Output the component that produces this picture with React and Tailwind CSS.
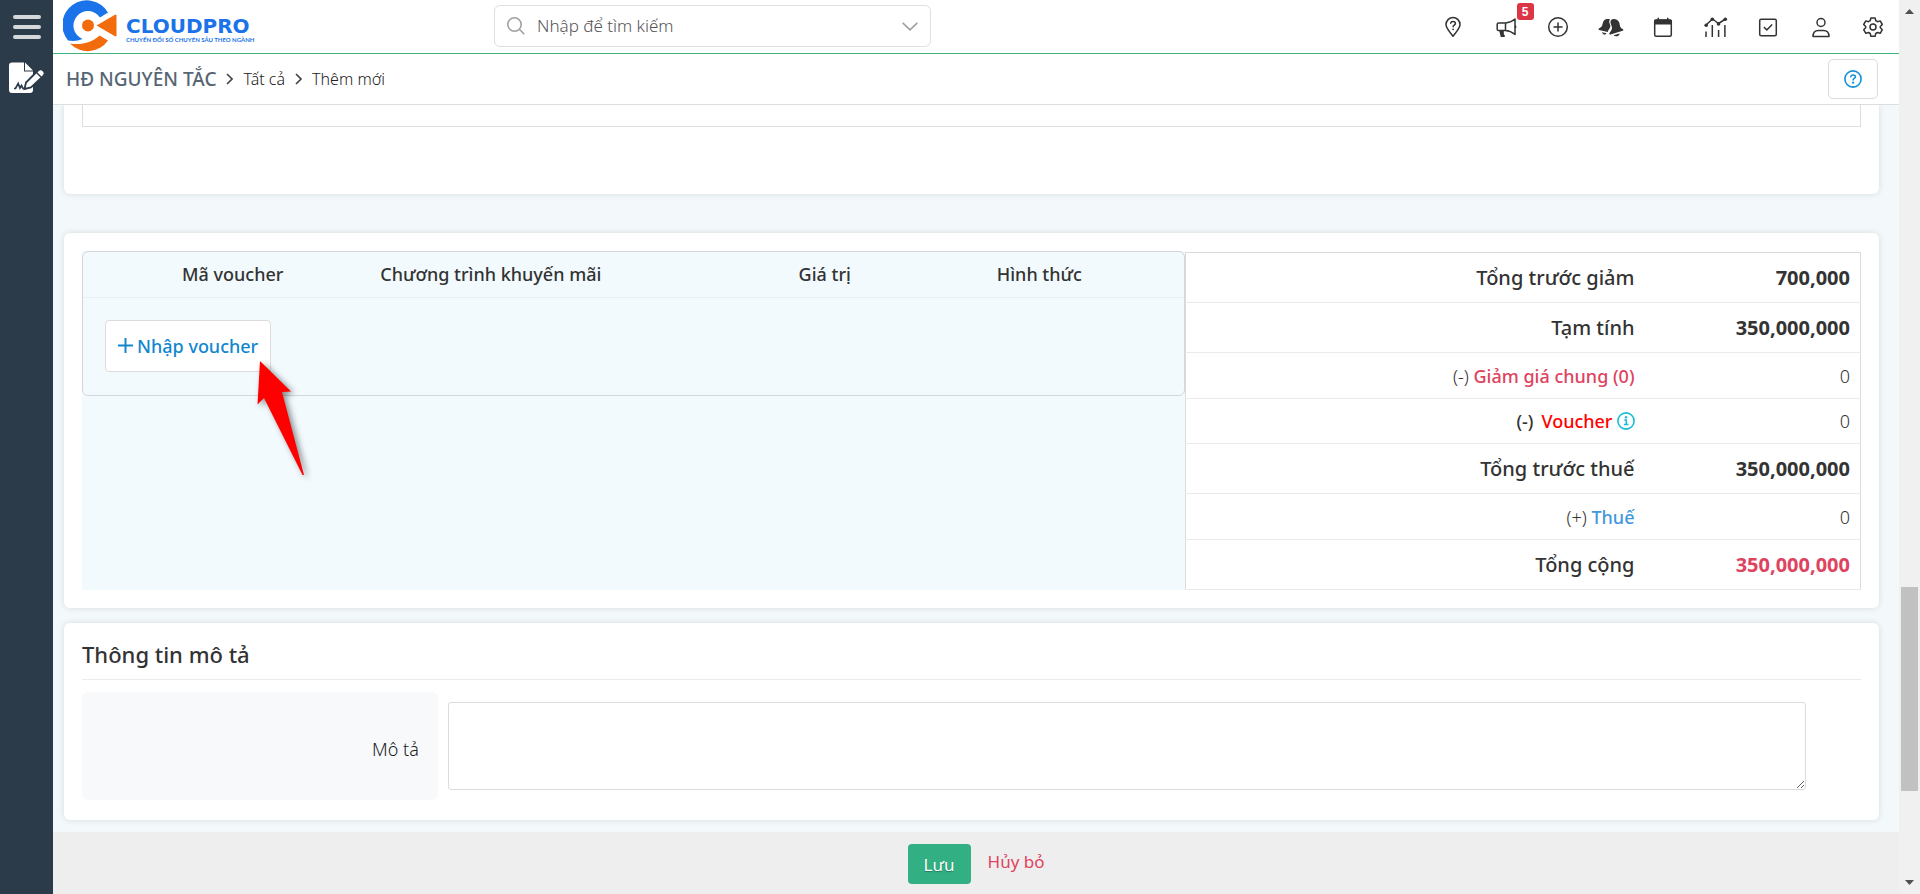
import { useState } from "react";

const headerIcons = [
  { id: "help", label: "Bản đồ", icon: <MapQuestionIcon /> },
  { id: "news", label: "Thông báo", icon: <MegaphoneIcon />, badge: 5 },
  { id: "add", label: "Thêm nhanh", icon: <PlusCircleIcon /> },
  { id: "bells", label: "Nhắc nhở", icon: <BellsIcon /> },
  { id: "calendar", label: "Lịch", icon: <CalendarIcon /> },
  { id: "report", label: "Báo cáo", icon: <ChartIcon /> },
  { id: "task", label: "Công việc", icon: <CheckSquareIcon /> },
  { id: "user", label: "Tài khoản", icon: <UserIcon /> },
  { id: "settings", label: "Cài đặt", icon: <GearIcon /> },
];

function Svg({ children, className = "size-6" }) {
  return (
    <svg
      viewBox="0 0 24 24"
      className={className}
      fill="none"
      stroke="currentColor"
      strokeWidth="1.5"
      strokeLinecap="round"
      strokeLinejoin="round"
      aria-hidden="true"
    >
      {children}
    </svg>
  );
}

function MapQuestionIcon() {
  return (
    <Svg>
      <path d="M12 21.3C10.5 19.1 5 13.600 5 9.600a7 7 0 0 1 14 0c0 4-5.500 9.500-7 11.700Z" />
      <path d="M9.700 8.200c.2-1.100 1.100-1.700 2.300-1.700 1.400 0 2.400.8 2.400 2 0 1.700-2.300 1.600-2.300 3.200" />
      <circle cx="12.100" cy="14.300" r=".9" fill="currentColor" stroke="none" />
    </Svg>
  );
}

function MegaphoneIcon() {
  return (
    <Svg>
      <path d="M11.500 8H4.500a1.300 1.300 0 0 0-1.300 1.300v4.900a1.300 1.300 0 0 0 1.300 1.300h7c3 .1 6.400 1.400 9.500 4V4c-3.100 2.600-6.500 3.900-9.500 4Zm0 0v7.500" />
      <path d="M5.200 15.800 6.800 22h4v-1.500l-1-1.200v-3.500Z" fill="currentColor" stroke="none" />
      <path d="M21 10v3.600c.9-.2 1.400-.9 1.400-1.800S21.900 10.200 21 10Z" fill="currentColor" stroke="none" />
    </Svg>
  );
}

function PlusCircleIcon() {
  return (
    <Svg>
      <circle cx="12" cy="12" r="9.300" />
      <path d="M12 8v8M8 12h8" />
    </Svg>
  );
}

function BellsIcon() {
  return (
    <svg viewBox="0 0 26 24" className="h-6 w-[26px] shrink-0" fill="currentColor" aria-hidden="true">
      <path d="M12 4.300C10.500 3.700 7.500 3.800 6 5.500 4.300 7.500 5 10.300 3.200 12L.9 13.400c-.6.500-.5 1.300.2 1.500l8.700 2.100c.1-2.200 2.500-3.300 2.600-5.700 0-2.300-2.300-4-.4-7Z" />
      <path d="M13.200 4.800C15.500 3.300 19.500 4 21 7c1 2.200.5 4.300 2 5.900l2 1.400c.6.500.4 1.200-.3 1.400L12.500 19.600c-.9.200-1.500-.7-1-1.500.9-1.500 2.400-2.600 2.500-5 .1-2.900-2.800-5.200-.8-8.300Z" />
      <path d="M4 17.200l4.500 1.100c-.9 2-3.700 1.400-4.500-1.100ZM15.500 20.200l6-1.800c.2 2.500-3.700 4-6 1.800Z" />
    </svg>
  );
}

function CalendarIcon() {
  return (
    <Svg>
      <rect x="3.700" y="5.200" width="16.600" height="16" rx="1.500" />
      <path d="M3 9.500V6.200C3 5 3.800 4.300 5 4.300h14c1.200 0 2 .7 2 1.900v3.300Z" fill="currentColor" stroke="none" />
      <path d="M7.200 3.200v2M16.800 3.200v2" />
    </Svg>
  );
}

function ChartIcon() {
  return (
    <Svg>
      <path d="m2 10 6.500-6 6 4.500L21.500 4" />
      <path d="M2 16.500V22M8.300 10v12M14.600 15v7M20.900 10v12" strokeLinecap="butt" />
      <g fill="currentColor" stroke="none">
        <circle cx="2.200" cy="10.200" r="1.800" />
        <circle cx="8.300" cy="4.200" r="1.800" />
        <circle cx="14.500" cy="8.900" r="1.800" />
        <circle cx="21.300" cy="4.300" r="1.800" />
      </g>
    </Svg>
  );
}

function CheckSquareIcon() {
  return (
    <Svg>
      <rect x="3.700" y="4.200" width="16.600" height="16.600" rx="1.500" />
      <path d="m8.300 12.500 2.500 2.400 4.900-5" />
    </Svg>
  );
}

function UserIcon() {
  return (
    <Svg>
      <circle cx="12" cy="7.500" r="4" />
      <path d="M4 21.500c0-3.700 2.200-6 5.500-6h5c3.300 0 5.500 2.300 5.500 6Z" />
    </Svg>
  );
}

function GearIcon() {
  return (
    <Svg>
      <path d="M9.900 3h4.200l.7 2.700 1.700 1 2.700-.8 2.100 3.600-2 2v1.200l2 2-2.100 3.600-2.700-.8-1.700 1-.7 2.700H9.900l-.7-2.700-1.700-1-2.700.8-2.100-3.600 2-2v-1.200l-2-2 2.100-3.600 2.700.8 1.700-1Z" />
      <circle cx="12" cy="12.100" r="3" />
    </Svg>
  );
}

function QuestionCircleIcon() {
  return (
    <svg viewBox="0 0 18 18" className="size-[18px]" fill="none" stroke="currentColor" strokeWidth="1.600" strokeLinecap="round" aria-hidden="true">
      <circle cx="9" cy="9" r="8.100" />
      <path d="M6.800 6.600c.2-1 1-1.600 2.300-1.600 1.400 0 2.300.7 2.300 1.900 0 1.500-2.300 1.400-2.300 3" />
      <circle cx="9.100" cy="12.700" r="1.100" fill="currentColor" stroke="none" />
    </svg>
  );
}

function InfoCircleIcon() {
  return (
    <svg viewBox="0 0 18 18" className="size-[18px] text-[#17bdd3]" fill="none" stroke="currentColor" strokeWidth="1.600" aria-hidden="true">
      <circle cx="9" cy="9" r="8.100" />
      <path d="M7.300 8h2v4.500M7 12.500h4.400" />
      <circle cx="9" cy="5.300" r="1.200" fill="currentColor" stroke="none" />
    </svg>
  );
}

function ContractIcon() {
  return (
    <svg viewBox="0 0 36 32" className="h-8 w-9" aria-hidden="true">
      <path d="M3 .5h12v9h9V28a3 3 0 0 1-3 3H3a3 3 0 0 1-3-3V3.500a3 3 0 0 1 3-3Z" fill="#fff" />
      <path d="M16 .5 24 8.500h-8Z" fill="#fff" />
      <path d="M5 26.500h1.500l2.700-5 1.800 4.500 1.500-2.500 1.500 3h3.500" fill="none" stroke="#2c3b49" strokeWidth="1.700" />
      <path d="M15.500 27 17 20.500 29 8.500a3.700 3.700 0 0 1 5.300 5.300L22 25.500Z" fill="#fff" stroke="#2c3b49" strokeWidth="1.800" />
      <path d="m27.500 10.500 4.500 4.500" stroke="#2c3b49" strokeWidth="1.500" />
    </svg>
  );
}

function LogoMark() {
  return (
    <svg viewBox="0 1 54 52" className="h-[52px] w-[54px]" aria-hidden="true">
      <path d="M45 13.500A24.500 24.500 0 1 0 5 41.500C10 42.500 15 42 19.500 40A14.500 14.500 0 1 1 37 18.500Z" fill="#1a73e8" />
      <path d="M7 44.500C18 46.500 29 43.500 36.500 36.500L45 41.500A24.500 24.500 0 0 1 7 44.500Z" fill="#f26b0c" />
      <circle cx="25" cy="26.500" r="6" fill="#f26b0c" />
      <path d="M33.500 26.500 52 15.700a1 1 0 0 1 1.500.9v19.800a1 1 0 0 1-1.500.9Z" fill="#f26b0c" />
    </svg>
  );
}

function RedArrow() {
  return (
    <svg
      viewBox="0 0 47 114"
      className="pointer-events-none absolute top-[41px] left-[152px] h-[114px] w-[47px] overflow-visible drop-shadow-[3px_2px_3px_rgba(0,0,0,0.45)]"
      aria-hidden="true"
    >
      <path d="M3 0 34 30.500 25 31 47 114h-1.500L7 37l-6.500 6.500Z" fill="#ff0000" />
    </svg>
  );
}

function Sidebar() {
  return (
    <aside className="flex w-[53px] shrink-0 flex-col bg-[#2c3b49]">
      <button type="button" aria-label="Menu" className="flex h-[53px] flex-col items-center justify-center gap-[6px]">
        <span className="h-1 w-7 rounded-full bg-[#d5d8db]" />
        <span className="h-1 w-7 rounded-full bg-[#d5d8db]" />
        <span className="h-1 w-7 rounded-full bg-[#d5d8db]" />
      </button>
      <a href="#contract" aria-label="Hợp đồng" className="flex justify-center pt-[9px]">
        <ContractIcon />
      </a>
    </aside>
  );
}

function Header() {
  const [search, setSearch] = useState("");

  return (
    <header className="flex h-[54px] shrink-0 items-start border-b border-[#3fb57c] bg-white pr-[14px] pl-[10px]">
      <a href="#home" className="flex w-[431px] shrink-0 items-center gap-[9px]">
        <LogoMark />
        <span className="flex flex-col pt-2 text-[#1a73e8]">
          <span className="font-['DejaVu_Sans'] text-xl leading-5 font-bold">CLOUDPRO</span>
          <span className="font-[Lato] text-[6px] leading-2 font-bold whitespace-nowrap">
            CHUYỂN ĐỔI SỐ CHUYÊN SÂU THEO NGÀNH
          </span>
        </span>
      </a>

      <div className="mt-[5px] flex h-[42px] w-[437px] items-center gap-3 rounded-md border border-[#dfdfdf] px-3">
        <svg viewBox="0 0 18 18" className="size-[18px] shrink-0" fill="none" stroke="#a0a0a0" strokeWidth="1.600" aria-hidden="true">
          <circle cx="7.500" cy="7.500" r="6.700" />
          <path d="m12.300 12.300 5 5" />
        </svg>
        <input
          type="text"
          aria-label="Tìm kiếm"
          placeholder="Nhập để tìm kiếm"
          value={search}
          onChange={(e) => setSearch(e.target.value)}
          className="min-w-0 flex-1 text-[17px] font-light outline-none placeholder:text-[#555]"
        />
        <button type="button" aria-label="Mở rộng">
          <svg viewBox="0 0 16 9" className="h-[9px] w-4" fill="none" stroke="#a0a0a0" strokeWidth="1.600" aria-hidden="true">
            <path d="m.7.800 7.300 7 7.300-7" />
          </svg>
        </button>
      </div>

      <nav className="ml-auto flex h-[54px] w-[444px] items-center justify-between text-[#333]">
        {headerIcons.map((item) => (
          <button key={item.id} type="button" aria-label={item.label} className="relative flex w-6 justify-center">
            {item.icon}
            {item.badge && (
              <span className="absolute -top-3 left-[23px] flex size-[17px] items-center justify-center rounded-[3px] bg-[#dc3545] font-['Liberation_Sans'] text-xs font-bold text-white">
                {item.badge}
              </span>
            )}
          </button>
        ))}
      </nav>
    </header>
  );
}

function Separator() {
  return (
    <svg viewBox="0 0 7 12" className="h-3 w-[7px]" fill="none" stroke="#444" strokeWidth="1.600" aria-hidden="true">
      <path d="m1 1 5 5-5 5" />
    </svg>
  );
}

function Breadcrumb() {
  return (
    <div className="flex h-[51px] shrink-0 items-center justify-between border-b border-[#dedede] bg-white pr-[21px] pl-[13px]">
      <nav className="flex items-center gap-[10px] text-base font-light text-[#222]">
        <a href="#contracts" className="text-[19px] font-medium text-[#566573]">
          HĐ NGUYÊN TẮC
        </a>
        <Separator />
        <a href="#all">Tất cả</a>
        <Separator />
        <span>Thêm mới</span>
      </nav>
      <button
        type="button"
        aria-label="Trợ giúp"
        className="flex h-10 w-[50px] items-center justify-center rounded-[5px] border border-[#dcdcdc] text-[#1490d8]"
      >
        <QuestionCircleIcon />
      </button>
    </div>
  );
}

function Card({ className = "", children }) {
  return (
    <section className={`rounded-md bg-white px-[18px] shadow-[0_0_6px_rgba(0,0,0,0.12)] ${className}`}>
      {children}
    </section>
  );
}

function VoucherPanel() {
  return (
    <div className="w-[62%] bg-[#f2fafd]">
      <div className="h-[145px] rounded-md border border-[#d3d7d9]">
        <table className="w-full table-fixed text-left text-lg text-[#333]">
          <thead>
            <tr className="h-[45px] border-b border-[#e9eef0]">
              <th className="w-[9%]" />
              <th className="w-[18%] font-medium">Mã voucher</th>
              <th className="w-[38%] font-medium">Chương trình khuyến mãi</th>
              <th className="w-[18%] font-medium">Giá trị</th>
              <th className="font-medium">Hình thức</th>
            </tr>
          </thead>
        </table>
        <div className="relative mt-[22px] ml-[22px] w-fit">
          <button
            type="button"
            className="flex h-[52px] items-center gap-1 rounded border border-[#dcdcdc] bg-white px-3 text-lg font-medium text-[#1087cf]"
          >
            <svg viewBox="0 0 15 15" className="size-[15px]" stroke="currentColor" strokeWidth="2" aria-hidden="true">
              <path d="M7.500 0v15M0 7.500h15" />
            </svg>
            Nhập voucher
          </button>
          <RedArrow />
        </div>
      </div>
    </div>
  );
}

const rowStyles = {
  total: "h-[50px] border-b border-[#ebebeb] text-xl",
  normal: "h-[46px] border-b border-[#ebebeb] text-lg font-light",
  voucher: "h-[45px] border-b border-[#ebebeb] text-lg font-light",
};

function TotalRow({ type = "normal", label, value, danger }) {
  return (
    <tr className={rowStyles[type]}>
      <th scope="row" className="leading-6 font-medium">
        {label}
      </th>
      <td className={`w-[226px] pr-[10px] leading-6 ${type === "total" ? "font-bold" : ""} ${danger ? "text-[#de4360]" : ""}`}>
        {value}
      </td>
    </tr>
  );
}

function Totals() {
  return (
    <table className="mt-px flex-1 border border-[#d9dbdc] text-right text-[#333]">
      <tbody>
        <TotalRow type="total" label="Tổng trước giảm" value="700,000" />
        <TotalRow type="total" label="Tạm tính" value="350,000,000" />
        <TotalRow
          label={
            <>
              <span className="font-light">(-) </span>
              <a href="#discount" className="text-[#de4360]">Giảm giá chung (0)</a>
            </>
          }
          value="0"
        />
        <TotalRow
          type="voucher"
          label={
            <span className="flex items-center justify-end">
              (-)
              <a href="#voucher" className="mr-1 ml-2 text-[#ff0000]">Voucher</a>
              <InfoCircleIcon />
            </span>
          }
          value="0"
        />
        <TotalRow type="total" label="Tổng trước thuế" value="350,000,000" />
        <TotalRow
          label={
            <>
              <span className="font-light">(+) </span>
              <a href="#tax" className="text-[#3f97dc]">Thuế</a>
            </>
          }
          value="0"
        />
        <TotalRow type="total" danger label="Tổng cộng" value="350,000,000" />
      </tbody>
    </table>
  );
}

function Description() {
  const [moTa, setMoTa] = useState("");

  return (
    <Card className="mt-[15px] pt-3 pb-5">
      <h2 className="border-b border-[#ebebeb] pt-1 pb-[9px] text-[22px] leading-[31px] font-medium text-[#333]">
        Thông tin mô tả
      </h2>
      <div className="mt-3 flex gap-[10px]">
        <label
          htmlFor="mo-ta"
          className="flex h-[108px] w-1/5 items-center justify-end rounded-md bg-[#f8f9fb] pt-[6px] pr-[19px] text-lg font-light text-[#222]"
        >
          Mô tả
        </label>
        <textarea
          id="mo-ta"
          value={moTa}
          onChange={(e) => setMoTa(e.target.value)}
          className="mt-[10px] mr-[55px] h-[88px] flex-1 rounded-[3px] border border-[#dcdcdc] p-2 outline-none"
        />
      </div>
    </Card>
  );
}

function ScrollTrack() {
  return (
    <div className="flex w-[21px] shrink-0 flex-col items-center bg-[#f0f0f0]" aria-hidden="true">
      <svg viewBox="0 0 9 5" className="mt-[9px] h-[5px] w-[9px]" fill="#505050">
        <path d="M4.500 0 9 5H0Z" />
      </svg>
      <span className="mt-auto mb-[89px] h-[204px] w-[17px] bg-[#c1c1c1]" />
      <svg viewBox="0 0 9 5" className="mb-[9px] h-[5px] w-[9px]" fill="#505050">
        <path d="M0 0h9L4.500 5Z" />
      </svg>
    </div>
  );
}

export default function App() {
  return (
    <div className="flex h-screen overflow-hidden font-['Noto_Sans',sans-serif]">
      <Sidebar />
      <div className="flex min-w-0 flex-1 flex-col bg-[#f3f8fb]">
        <Header />
        <Breadcrumb />
        <main className="min-h-0 flex-1 overflow-hidden pr-5 pl-[11px]">
          <Card className="rounded-t-none pb-[67px]">
            <div className="h-[22px] border-x border-b border-[#dedede]" />
          </Card>
          <Card className="mt-[39px] flex py-[18px]">
            <VoucherPanel />
            <Totals />
          </Card>
          <Description />
        </main>
        <footer className="flex h-[62px] shrink-0 items-start justify-center gap-[17px] bg-[#eee] pt-3 text-[17px]">
          <button
            type="submit"
            className="h-10 w-[63px] rounded bg-[#32b083] pt-[2px] text-white [text-shadow:0_1px_1px_rgba(0,0,0,0.3)]"
          >
            Lưu
          </button>
          <a href="#cancel" className="leading-9 text-[#de4360]">Hủy bỏ</a>
        </footer>
      </div>
      <ScrollTrack />
    </div>
  );
}
